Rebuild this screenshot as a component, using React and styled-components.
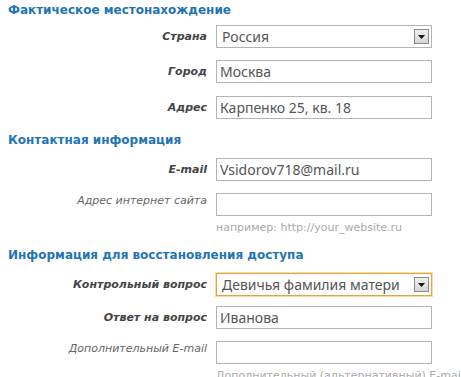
import React from "react";
import styled, { createGlobalStyle } from "styled-components";

const Global = createGlobalStyle`
  html, body { margin: 0; padding: 0; background: #fff; }
  body { font-family: "DejaVu Sans", Verdana, sans-serif; }
`;

const Page = styled.div`
  width: 461px;
  height: 377px;
  overflow: hidden;
  padding: 2px 0 0 8px;
  box-sizing: border-box;
`;

const Heading = styled.h2`
  margin: ${(p) => p.$mt || 0}px 0 0 0;
  font-family: "DejaVu Sans", Verdana, sans-serif;
  font-weight: bold;
  font-size: 12px;
  line-height: 16px;
  color: #1f74b6;
`;

const Row = styled.div`
  display: flex;
  align-items: flex-start;
  margin-top: ${(p) => p.$mt}px;
`;

const Label = styled.label`
  flex: 0 0 199px;
  margin-right: 9px;
  text-align: right;
  font-family: "DejaVu Sans", Verdana, sans-serif;
  font-size: 11px;
  font-style: italic;
  font-weight: ${(p) => (p.$strong ? "bold" : "normal")};
  color: ${(p) => (p.$strong ? "#444" : "#666")};
  line-height: 14px;
  padding-top: ${(p) => (p.$strong ? 5 : 1)}px;
  white-space: nowrap;
`;

const Control = styled.div`
  flex: 0 0 216px;
  display: flex;
  flex-direction: column;
`;

const Input = styled.div`
  box-sizing: border-box;
  width: 216px;
  height: 23px;
  border: 1px solid #b4b4b4;
  background: #fff;
  font-family: "Noto Sans", "Open Sans", sans-serif;
  font-size: 14px;
  color: #555;
  line-height: 21px;
  padding-left: 3px;
  white-space: nowrap;
  overflow: hidden;
`;

const Select = styled(Input)`
  display: flex;
  align-items: center;
  justify-content: space-between;
  padding: 0 2px 0 5px;
  border-color: ${(p) => (p.$focus ? "#e8a23a" : "#b4b4b4")};
  box-shadow: ${(p) => (p.$focus ? "0 0 0 1px #f6dcae" : "none")};
`;

const ArrowBox = styled.span`
  box-sizing: border-box;
  flex: 0 0 15px;
  height: 15px;
  border: 1px solid #8a8a8a;
  background: linear-gradient(#f0f0f0, #d6d6d6);
  display: flex;
  align-items: center;
  justify-content: center;
`;

const Hint = styled.div`
  margin-top: 5px;
  font-family: "DejaVu Sans", Verdana, sans-serif;
  font-size: 11px;
  line-height: 13px;
  color: #aaa;
  white-space: nowrap;
`;

const Arrow = () => (
  <ArrowBox>
    <svg width="7" height="4" viewBox="0 0 7 4">
      <polygon points="0,0 7,0 3.5,4" fill="#111" />
    </svg>
  </ArrowBox>
);

export default function App() {
  return (
    <Page>
      <Global />
      <Heading>Фактическое местонахождение</Heading>
      <Row $mt={7}>
        <Label $strong>Страна</Label>
        <Select>
          <span>Россия</span>
          <Arrow />
        </Select>
      </Row>
      <Row $mt={12}>
        <Label $strong>Город</Label>
        <Input>Москва</Input>
      </Row>
      <Row $mt={13}>
        <Label $strong>Адрес</Label>
        <Input>Карпенко 25, кв. 18</Input>
      </Row>
      <Heading $mt={13}>Контактная информация</Heading>
      <Row $mt={10}>
        <Label $strong>E-mail</Label>
        <Input>Vsidorov718@mail.ru</Input>
      </Row>
      <Row $mt={12}>
        <Label>Адрес интернет сайта</Label>
        <Control>
          <Input />
          <Hint>например: http://your_website.ru</Hint>
        </Control>
      </Row>
      <Heading $mt={13}>Информация для восстановления доступа</Heading>
      <Row $mt={10}>
        <Label $strong>Контрольный вопрос</Label>
        <Select $focus>
          <span>Девичья фамилия матери</span>
          <Arrow />
        </Select>
      </Row>
      <Row $mt={10}>
        <Label $strong>Ответ на вопрос</Label>
        <Input>Иванова</Input>
      </Row>
      <Row $mt={12}>
        <Label>Дополнительный E-mail</Label>
        <Control>
          <Input />
          <Hint>Дополнительный (альтернативный) E-mail для восстановления</Hint>
        </Control>
      </Row>
    </Page>
  );
}
